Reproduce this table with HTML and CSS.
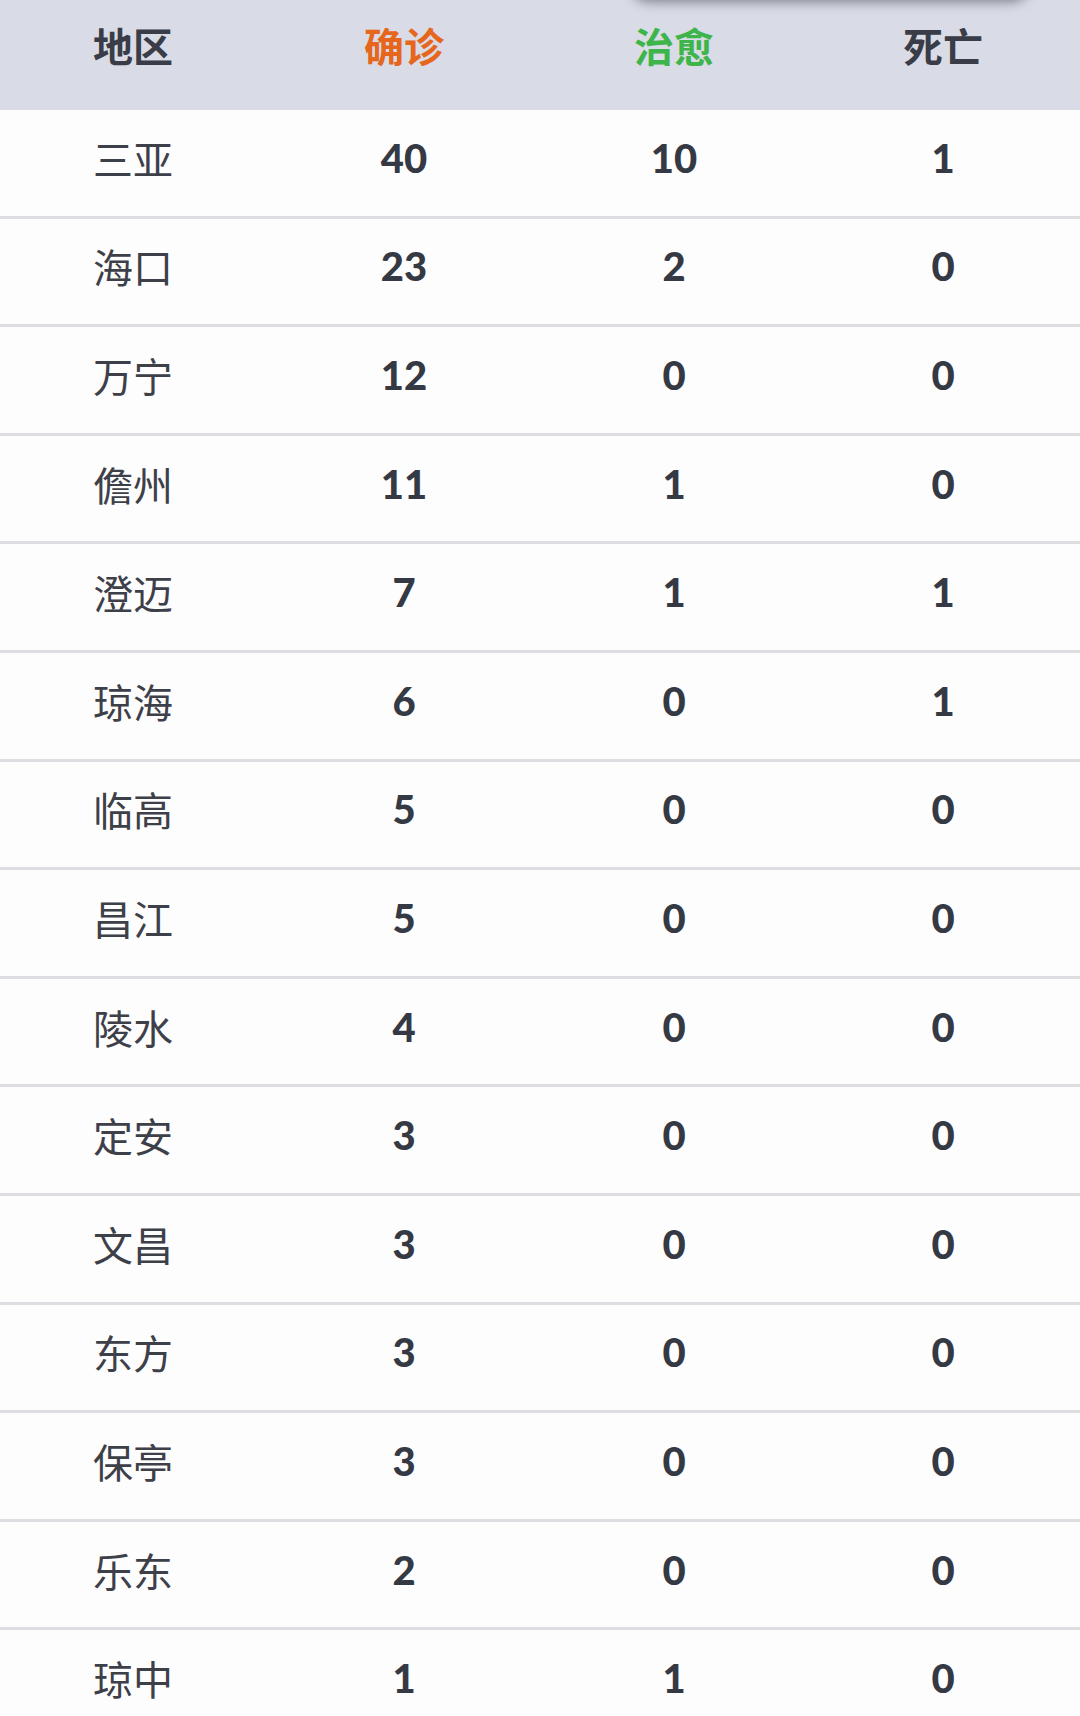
FILE: index.html
```html
<!DOCTYPE html>
<html lang="zh-CN">
<head>
<meta charset="utf-8">
<link rel="stylesheet" href="styles.css">
<title>海南疫情</title>
</head>
<body>
<div class="page">
  <div class="overlay-shadow"></div>
  <div class="row head">
    <div class="cell">地区</div>
    <div class="cell orange">确诊</div>
    <div class="cell green">治愈</div>
    <div class="cell">死亡</div>
  </div>
  <div class="row"><div class="cell name">三亚</div><div class="cell num">40</div><div class="cell num">10</div><div class="cell num">1</div></div>
  <div class="row"><div class="cell name">海口</div><div class="cell num">23</div><div class="cell num">2</div><div class="cell num">0</div></div>
  <div class="row"><div class="cell name">万宁</div><div class="cell num">12</div><div class="cell num">0</div><div class="cell num">0</div></div>
  <div class="row"><div class="cell name">儋州</div><div class="cell num">11</div><div class="cell num">1</div><div class="cell num">0</div></div>
  <div class="row"><div class="cell name">澄迈</div><div class="cell num">7</div><div class="cell num">1</div><div class="cell num">1</div></div>
  <div class="row"><div class="cell name">琼海</div><div class="cell num">6</div><div class="cell num">0</div><div class="cell num">1</div></div>
  <div class="row"><div class="cell name">临高</div><div class="cell num">5</div><div class="cell num">0</div><div class="cell num">0</div></div>
  <div class="row"><div class="cell name">昌江</div><div class="cell num">5</div><div class="cell num">0</div><div class="cell num">0</div></div>
  <div class="row"><div class="cell name">陵水</div><div class="cell num">4</div><div class="cell num">0</div><div class="cell num">0</div></div>
  <div class="row"><div class="cell name">定安</div><div class="cell num">3</div><div class="cell num">0</div><div class="cell num">0</div></div>
  <div class="row"><div class="cell name">文昌</div><div class="cell num">3</div><div class="cell num">0</div><div class="cell num">0</div></div>
  <div class="row"><div class="cell name">东方</div><div class="cell num">3</div><div class="cell num">0</div><div class="cell num">0</div></div>
  <div class="row"><div class="cell name">保亭</div><div class="cell num">3</div><div class="cell num">0</div><div class="cell num">0</div></div>
  <div class="row"><div class="cell name">乐东</div><div class="cell num">2</div><div class="cell num">0</div><div class="cell num">0</div></div>
  <div class="row"><div class="cell name">琼中</div><div class="cell num">1</div><div class="cell num">1</div><div class="cell num">0</div></div>
</div>
</body>
</html>
```
FILE: styles.css
```css
html, body {
  margin: 0;
  padding: 0;
  background: #ffffff;
}
body {
  width: 1080px;
  height: 1716px;
  overflow: hidden;
  font-family: "Noto Sans CJK SC", "Noto Sans", sans-serif;
  color: #3b3e48;
}
.page {
  position: relative;
  width: 1080px;
}
.overlay-shadow {
  position: absolute;
  top: -40px;
  left: 630px;
  width: 400px;
  height: 38px;
  border-radius: 22px;
  background: #b9bcc4;
  box-shadow: 0 4px 12px rgba(50, 52, 60, 0.55);
  z-index: 2;
}
.row {
  display: grid;
  grid-template-columns: 266px 276px 264px 274px;
  box-sizing: border-box;
  height: 108.6px;
  border-bottom: 3px solid #dcdee2;
  background: #fdfdfd;
  align-items: center;
  padding-bottom: 10px;
}
.row.head {
  height: 110px;
  border-bottom: none;
  background: #d9dce6;
  padding-bottom: 20px;
}
.cell {
  text-align: center;
  line-height: 1;
}
.head .cell {
  font-size: 40px;
  font-weight: 700;
  color: #3a3d47;
}
.head .orange { color: #e5661c; }
.head .green { color: #3db54a; }
.name {
  font-size: 40px;
  font-weight: 400;
  color: #3d4049;
}
.num {
  font-family: "Lato", "Noto Sans", sans-serif;
  font-weight: 900;
  font-size: 40px;
  color: #353944;
}
```
